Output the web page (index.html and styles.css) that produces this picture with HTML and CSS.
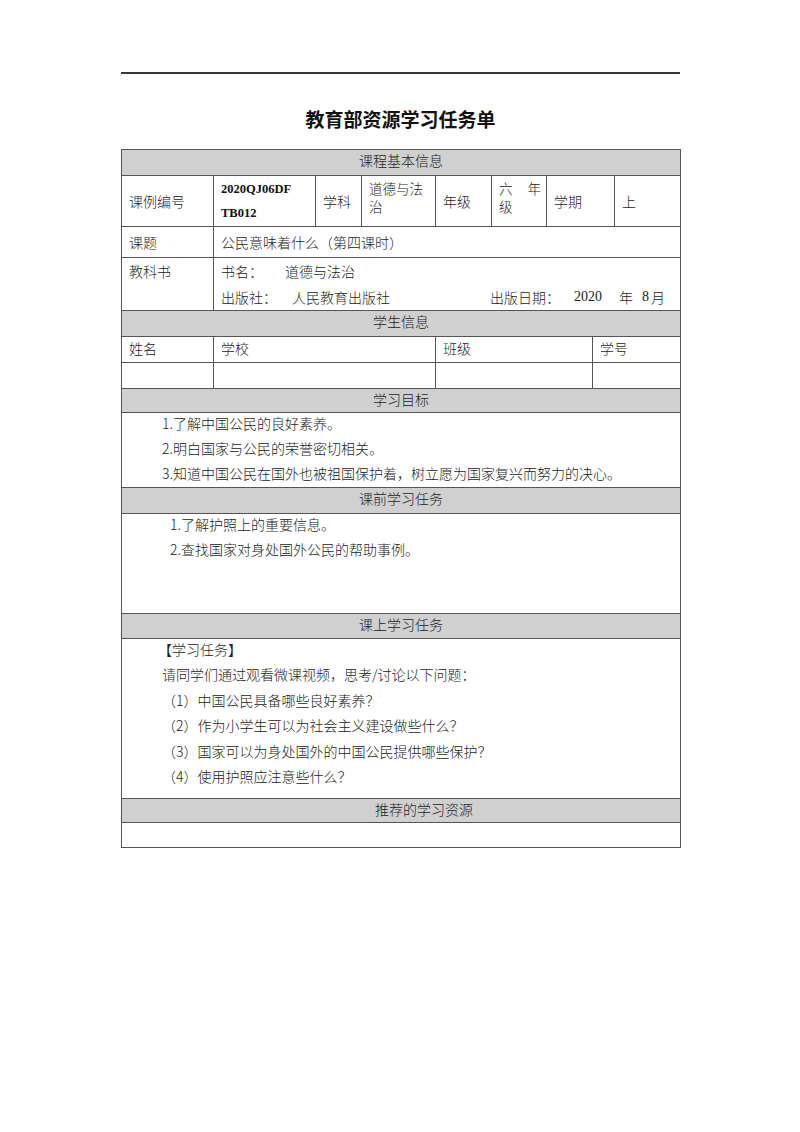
FILE: index.html
```html
<!DOCTYPE html>
<html lang="zh-CN">
<head>
<meta charset="utf-8">
<title>教育部资源学习任务单</title>
<link rel="stylesheet" href="styles.css">
</head>
<body>
<div class="page">
  <div class="rule"></div>
  <h1 class="title">教育部资源学习任务单</h1>
  <table class="sheet">
    <colgroup>
      <col class="c1"><col class="c2"><col class="c3"><col class="c4"><col class="c5"><col class="c6"><col class="c7"><col class="c8"><col class="c9">
    </colgroup>
    <tr class="head"><td colspan="9">课程基本信息</td></tr>
    <tr class="r-info">
      <td>课例编号</td>
      <td class="code"><div class="codebox">2020QJ06DF<br>TB012</div></td>
      <td>学科</td>
      <td class="tight"><div class="wrapbox"><div class="jline">道德与法</div><div>治</div></div></td>
      <td>年级</td>
      <td class="tight"><div class="wrapbox"><div class="jline2"><span>六</span><span>年</span></div><div>级</div></div></td>
      <td colspan="2">学期</td>
      <td>上</td>
    </tr>
    <tr class="r-topic">
      <td>课题</td>
      <td colspan="8">公民意味着什么（第四课时）</td>
    </tr>
    <tr class="r-book">
      <td class="top">教科书</td>
      <td colspan="8" class="top">
        <div class="bline"><span class="lbl1">书名：</span><span>道德与法治</span></div>
        <div class="bline"><span class="lbl2">出版社：</span><span class="pub">人民教育出版社</span><span class="lbl3">出版日期：</span><span class="num yearnum">2020</span><span class="yr">年</span><span class="num mon">8</span><span>月</span></div>
      </td>
    </tr>
    <tr class="head"><td colspan="9">学生信息</td></tr>
    <tr class="r-stu">
      <td>姓名</td>
      <td colspan="3">学校</td>
      <td colspan="3">班级</td>
      <td colspan="2">学号</td>
    </tr>
    <tr class="r-empty">
      <td></td><td colspan="3"></td><td colspan="3"></td><td colspan="2"></td>
    </tr>
    <tr class="head h2"><td colspan="9">学习目标</td></tr>
    <tr class="r-goals">
      <td colspan="9" class="list l1 top">
        <p>1.了解中国公民的良好素养。</p>
        <p>2.明白国家与公民的荣誉密切相关。</p>
        <p>3.知道中国公民在国外也被祖国保护着，树立愿为国家复兴而努力的决心。</p>
      </td>
    </tr>
    <tr class="head"><td colspan="9">课前学习任务</td></tr>
    <tr class="r-pre">
      <td colspan="9" class="list l2 top">
        <p>1.了解护照上的重要信息。</p>
        <p>2.查找国家对身处国外公民的帮助事例。</p>
      </td>
    </tr>
    <tr class="head h3"><td colspan="9">课上学习任务</td></tr>
    <tr class="r-in">
      <td colspan="9" class="list l3 top">
        <p class="br">【学习任务】</p>
        <p>请同学们通过观看微课视频，思考/讨论以下问题：</p>
        <p>（1）中国公民具备哪些良好素养？</p>
        <p>（2）作为小学生可以为社会主义建设做些什么？</p>
        <p>（3）国家可以为身处国外的中国公民提供哪些保护？</p>
        <p>（4）使用护照应注意些什么？</p>
      </td>
    </tr>
    <tr class="head h2"><td colspan="9" class="shift">推荐的学习资源</td></tr>
    <tr class="r-last"><td colspan="9"></td></tr>
  </table>
</div>
</body>
</html>
```
FILE: styles.css
```css
html, body {
  margin: 0;
  padding: 0;
  background: #ffffff;
}
body {
  font-family: "Noto Sans CJK SC", "Liberation Serif", serif;
  color: #222;
}
.page {
  width: 559px;
  margin: 0 0 0 121px;
  padding-top: 72px;
}
.rule {
  height: 2px;
  background: #3a3a3a;
}
.title {
  margin: 30px 0 0 0;
  height: 45px;
  font-size: 19px;
  line-height: 30px;
  font-weight: bold;
  text-align: center;
  color: #111;
}
.sheet {
  width: 559px;
  table-layout: fixed;
  border-collapse: collapse;
  font-size: 14px;
  color: #222;
}
.c1 { width: 92px; }
.c2 { width: 102px; }
.c3 { width: 46px; }
.c4 { width: 74px; }
.c5 { width: 56px; }
.c6 { width: 55px; }
.c7 { width: 46px; }
.c8 { width: 22px; }
.c9 { width: 66px; }
.sheet td {
  border: 1px solid #555;
  padding: 0 0 0 7px;
  line-height: 20px;
  vertical-align: middle;
  font-weight: 300;
}
.sheet td.top {
  vertical-align: top;
}
.head td {
  background: #d0d0d0;
  text-align: center;
  height: 25px;
  padding: 0;
  line-height: 20px;
  vertical-align: top;
}
.head.h2 td { height: 23px; }
.head.h3 td { height: 24px; }
.head td.shift { padding-left: 46px; }
.r-info td { height: 50px; }
.codebox {
  font-family: "Liberation Serif", serif;
  font-weight: bold;
  font-size: 12.5px;
  line-height: 24px;
  height: 48px;
  margin-top: -1px;
  color: #111;
}
.sheet td.tight {
  vertical-align: top;
}
.wrapbox {
  font-size: 13.5px;
  line-height: 18px;
  height: 36px;
  padding-top: 3px;
}
.jline {
  display: flex;
  justify-content: space-between;
  width: 60px;
}
.jline2 {
  display: flex;
  justify-content: space-between;
  width: 42px;
}
.r-topic td { height: 30px; }
.r-book td { height: 51px; }
.r-book td.top { line-height: 26px; }
.bline { display: flex; white-space: nowrap; }
.bline span { flex-shrink: 0; }
.lbl1 { width: 64px; }
.lbl2 { width: 71px; }
.pub { width: 198px; }
.lbl3 { width: 84px; }
.num { font-family: "Liberation Serif", serif; font-weight: normal; }
.yearnum { width: 45px; }
.yr { width: 23px; }
.mon { width: 9px; }
.r-stu td { height: 24px; vertical-align: top; line-height: 20px; padding-top: 1px; }
.r-empty td { height: 25px; }
.sheet td.list { padding: 0; }
.list p { margin: 0; line-height: 25px; }
.list p:first-child { margin-top: -2px; }
.r-goals td { height: 74px; }
.l1 p { padding-left: 40px; }
.r-pre td { height: 99px; }
.l2 p { padding-left: 48px; }
.r-in td { height: 159px; }
.l3 p { padding-left: 40px; line-height: 25.4px; }
.l3 p.br { padding-left: 36px; }
.r-last td { height: 24px; }
```
